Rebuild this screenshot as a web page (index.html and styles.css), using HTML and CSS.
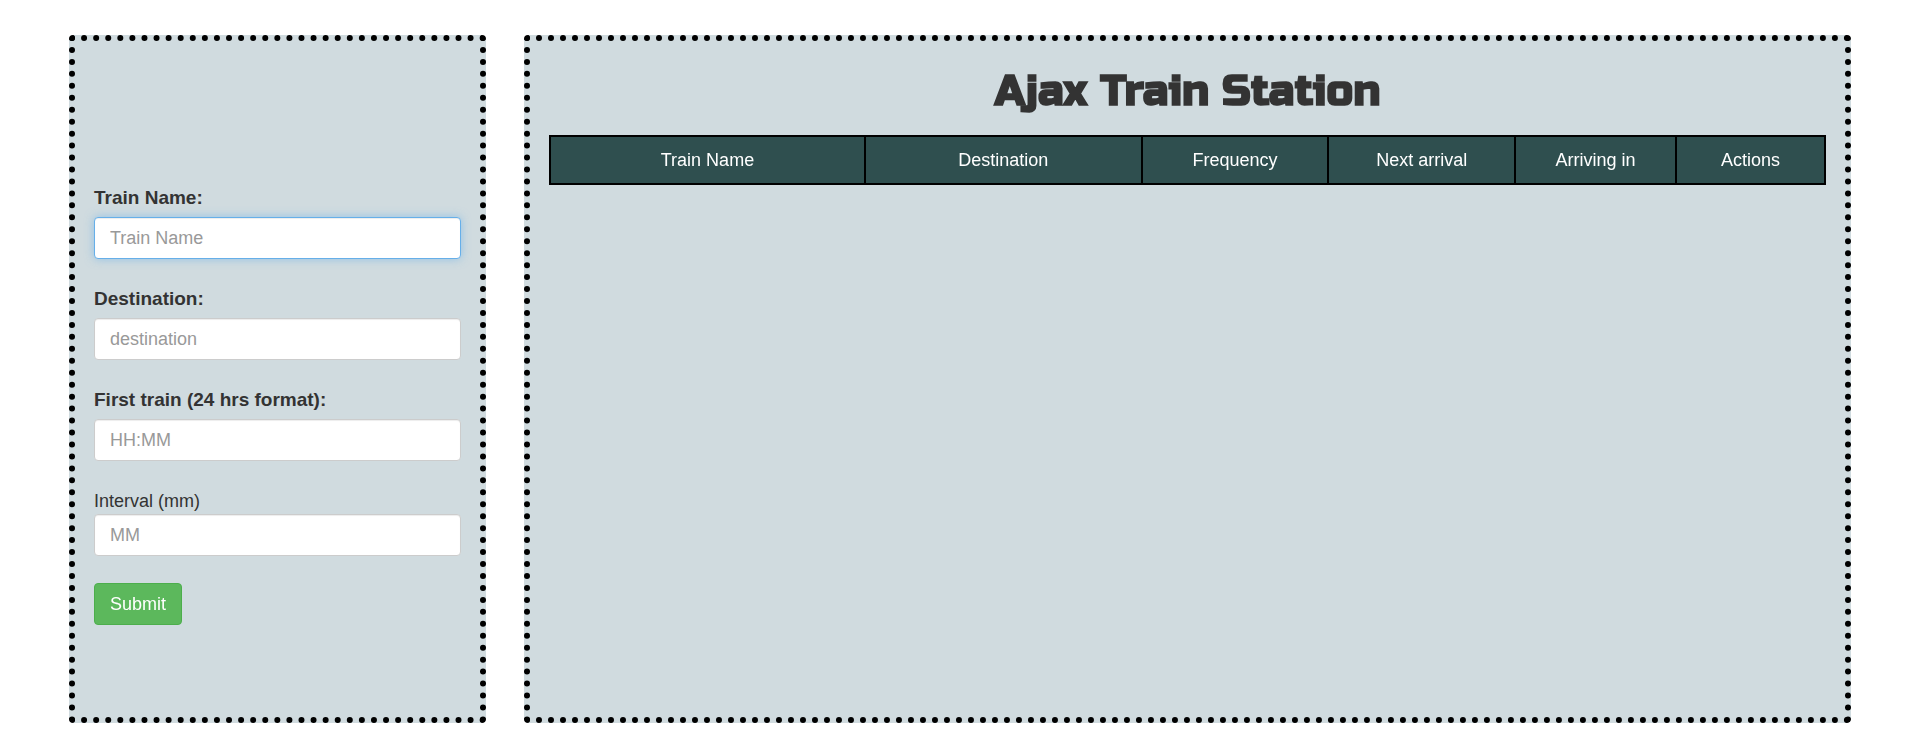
FILE: index.html
```html
<!DOCTYPE html>
<html lang="en">
<head>
  <meta charset="utf-8">
  <meta name="viewport" content="width=device-width, initial-scale=1">
  <title>Ajax Train Station</title>
  <link rel="stylesheet" href="styles.css">
</head>
<body>
  <main class="page">
    <section class="panel panel-form">
      <form class="train-form">
        <div class="field">
          <label class="field-label" for="train-name">Train Name:</label>
          <input class="field-input" id="train-name" type="text" placeholder="Train Name" autocomplete="off" autofocus>
        </div>
        <div class="field">
          <label class="field-label" for="destination">Destination:</label>
          <input class="field-input" id="destination" type="text" placeholder="destination" autocomplete="off">
        </div>
        <div class="field">
          <label class="field-label" for="first-train">First train (24 hrs format):</label>
          <input class="field-input" id="first-train" type="text" placeholder="HH:MM" autocomplete="off">
        </div>
        <div class="field">
          <label class="field-label field-label-plain" for="interval">Interval (mm)</label>
          <input class="field-input" id="interval" type="text" placeholder="MM" autocomplete="off">
        </div>
        <button class="submit" type="submit">Submit</button>
      </form>
    </section>

    <section class="panel panel-board">
      <h1 class="title">Ajax Train Station</h1>
      <table class="schedule">
        <thead>
          <tr>
            <th class="col-name" scope="col">Train Name</th>
            <th class="col-destination" scope="col">Destination</th>
            <th class="col-time" scope="col">Frequency</th>
            <th class="col-time" scope="col">Next arrival</th>
            <th class="col-arriving" scope="col">Arriving in</th>
            <th class="col-actions" scope="col">Actions</th>
          </tr>
        </thead>
      </table>
    </section>
  </main>
</body>
</html>
```

FILE: styles.css
```css
* {
  box-sizing: border-box;
}

body {
  margin: 0;
  background: #fff;
  color: #333;
  font-family: "Liberation Sans", Arial, sans-serif;
  font-size: 18px;
  line-height: 26px;
}

.page {
  display: grid;
  grid-template-columns: 417fr 1327fr;
  gap: 38px;
  min-height: 100vh;
  padding: 35px 58px 17px 69px;
}

.panel {
  padding: 19px;
  border: 6px dotted #000;
  border-radius: 4px;
  background: #d0dbdf;
}

.panel-form {
  padding-top: 144px;
}

.train-form {
  display: flex;
  flex-direction: column;
  align-items: flex-start;
  gap: 27px;
}

.field {
  width: 100%;
}

.field-label {
  display: block;
  margin-bottom: 6px;
  font-size: 19px;
  font-weight: 700;
}

.field-label-plain {
  margin-bottom: 0;
  font-size: 18px;
  font-weight: 400;
}

.field-input {
  display: block;
  width: 100%;
  height: 42px;
  padding: 6px 15px;
  border: 1px solid #ccc;
  border-radius: 4px;
  background: #fff;
  box-shadow: inset 0 1px 1px rgba(0, 0, 0, 0.075);
  color: #555;
  font-family: inherit;
  font-size: 18px;
}

.field-input::placeholder {
  color: #999;
  opacity: 1;
}

.field-input:focus {
  border-color: #66afe9;
  outline: 0;
  box-shadow: inset 0 1px 1px rgba(0, 0, 0, 0.075), 0 0 10px rgba(102, 175, 233, 0.6);
}

.submit {
  height: 42px;
  padding: 0 15px;
  border: 1px solid #4cae4c;
  border-radius: 4px;
  background: #5cb85c;
  color: #fff;
  font-family: inherit;
  font-size: 18px;
}

.title {
  margin: 7px 0 19px;
  font-family: "Russo One", Inter, sans-serif;
  font-size: 43px;
  font-weight: 700;
  line-height: 49px;
  text-align: center;
}

.schedule {
  width: 100%;
  border-collapse: collapse;
  table-layout: fixed;
  background: #2f4f4f;
  color: #fff;
}

.schedule th {
  padding: 10px 6px;
  border: 2px solid #000;
  font-weight: 400;
  text-align: center;
}

.col-name {
  width: 24.7%;
}

.col-destination {
  width: 21.7%;
}

.col-time {
  width: 14.65%;
}

.col-arriving {
  width: 12.6%;
}

.col-actions {
  width: 11.7%;
}
```
